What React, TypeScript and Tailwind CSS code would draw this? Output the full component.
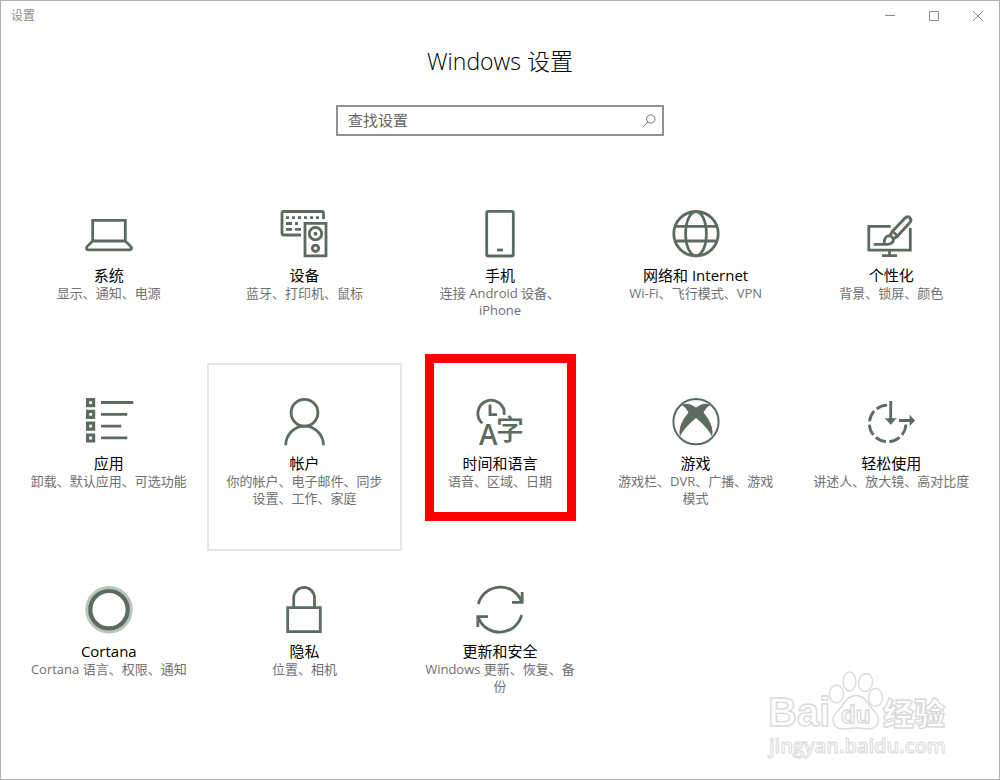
import { useState } from "react";
import type { ReactNode } from "react";

type Category = {
  title: string;
  desc: string;
  icon: ReactNode;
};

function Icon({ children }: { children: ReactNode }) {
  return (
    <svg
      viewBox="0 0 48 48"
      className="h-12 w-12 shrink-0 overflow-visible text-[#5b6b5f]"
      fill="none"
      stroke="currentColor"
      strokeWidth="2.8"
      aria-hidden="true"
    >
      {children}
    </svg>
  );
}

const categories: Category[] = [
  {
    title: "系统",
    desc: "显示、通知、电源",
    icon: (
      <Icon>
        <path d="M7.7 31V10.4h32.6V31zM7.7 31l-5.6 5.6c-1.2 1.4-.6 3.200 1.200 3.200h41.400c1.800 0 2.400-1.800 1.200-3.200L40.300 31" />
      </Icon>
    ),
  },
  {
    title: "设备",
    desc: "蓝牙、打印机、鼠标",
    icon: (
      <Icon>
        <path d="M21 25H3.500A1.500 1.500 0 0 1 2 23.500V3a1.500 1.500 0 0 1 1.500-1.500H42A1.500 1.500 0 0 1 43.500 3v6" />
        <path d="M6 7.700h3M12 7.700h3M18 7.700h3M24 7.700h3M30 7.700h3M36 7.700h3M6 13.500h6M15 13.500h3M6 19.400h6M15 19.400h6" />
        <path d="M25 13.400h21v32.400H25z" />
        <circle cx="35.5" cy="23.7" r="6.2" />
        <circle cx="35.5" cy="23.7" r="2" fill="currentColor" stroke="none" />
        <circle cx="35.5" cy="38.3" r="3.2" />
      </Icon>
    ),
  },
  {
    title: "手机",
    desc: "连接 Android 设备、iPhone",
    icon: (
      <Icon>
        <rect x="10.7" y="1.4" width="26.6" height="44.6" rx="1.5" />
        <path d="M21 40h6" />
      </Icon>
    ),
  },
  {
    title: "网络和 Internet",
    desc: "Wi-Fi、飞行模式、VPN",
    icon: (
      <Icon>
        <circle cx="24" cy="23.7" r="22.2" />
        <ellipse cx="24" cy="23.7" rx="10.4" ry="22.2" />
        <path d="M3 16.300h42M3 31h42" />
      </Icon>
    ),
  },
  {
    title: "个性化",
    desc: "背景、锁屏、颜色",
    icon: (
      <Icon>
        <path d="M23.700 16.400H1.800v23.700h41.500V18M22.600 40v6M15 45.700h15" />
        <path d="M25.500 21.300 37.600 8.500c3.900-4 8.500.4 4.900 4.500L30.600 26z" />
        <path d="M25.500 21.300l-2.700 4.500M30.600 26l-4.200 3" />
        <path d="M6.700 34.400h10.300c0-5.600 1.800-8.800 5.100-8.600 4.200.300 5.500 4.800 2.700 7.200-1.900 1.600-4.800 1.400-7.800 1.400" />
      </Icon>
    ),
  },
  {
    title: "应用",
    desc: "卸载、默认应用、可选功能",
    icon: (
      <Icon>
        <path
          d="M2.600 1.600h6v6h-6zM2.600 13.400h6v6h-6zM2.600 25.200h6v6h-6zM2.600 37h6v6h-6z"
          strokeWidth="3.2"
        />
        <path d="M16 4.500h32.300M16 16.300h26.300M16 28.100h20.300M16 39.800h26.300" />
      </Icon>
    ),
  },
  {
    title: "帐户",
    desc: "你的帐户、电子邮件、同步设置、工作、家庭",
    icon: (
      <Icon>
        <circle cx="24.5" cy="14.7" r="13.4" />
        <path d="M5.700 47.300a18.900 19.200 0 0 1 37.800 0" />
      </Icon>
    ),
  },
  {
    title: "时间和语言",
    desc: "语音、区域、日期",
    icon: (
      <Icon>
        <path d="M6.200 25.200A13.200 13.200 0 1 1 28.200 16.800" />
        <path d="M14 6.500v10.200h7" />
        <text
          x="3"
          y="47"
          className="font-['Open_Sans'] text-[28px] font-semibold"
          fill="currentColor"
          stroke="none"
        >
          A
        </text>
        <text
          x="20"
          y="42"
          className="font-['Noto_Sans_CJK_SC'] text-[28px] font-medium"
          fill="currentColor"
          stroke="none"
        >
          字
        </text>
      </Icon>
    ),
  },
  {
    title: "游戏",
    desc: "游戏栏、DVR、广播、游戏模式",
    icon: (
      <Icon>
        <circle cx="24" cy="23.7" r="22.6" strokeWidth="2" />
        <path
          d="M9.500 7.500C12 5 17 5 24 9.500 31 5 36 5 38.500 7.500 36 7.500 34 10.500 31.500 14.500 38 22 42 31 40 38.500 37 32 30 25 24 20 18 25 11 32 8 38.500 6 31 10 22 16.500 14.500 14 10.500 12 7.500 9.500 7.500Z"
          fill="currentColor"
          stroke="none"
        />
      </Icon>
    ),
  },
  {
    title: "轻松使用",
    desc: "讲述人、放大镜、高对比度",
    icon: (
      <Icon>
        <path
          d="M38.900 26.500A18.300 18.300 0 1 1 20 7.200"
          strokeDasharray="11.2 3.4"
        />
        <path d="M23.700 3v18M32 22.500h12" />
        <path
          d="M17.800 20.300h11.800l-5.900 6.400zM42.600 16.800v11.400l5.400-5.700z"
          fill="currentColor"
          stroke="none"
        />
      </Icon>
    ),
  },
  {
    title: "Cortana",
    desc: "Cortana 语言、权限、通知",
    icon: (
      <Icon>
        <circle cx="24" cy="23.7" r="21.7" stroke="#b9c4bb" strokeWidth="4" />
        <circle cx="24" cy="23.7" r="18.7" strokeWidth="4.2" />
      </Icon>
    ),
  },
  {
    title: "隐私",
    desc: "位置、相机",
    icon: (
      <Icon>
        <path d="M7.700 21.700h32.600v23.900H7.700zM13.700 21.700v-9.600a10.400 10.700 0 0 1 20.800 0v9.600" />
      </Icon>
    ),
  },
  {
    title: "更新和安全",
    desc: "Windows 更新、恢复、备份",
    icon: (
      <Icon>
        <path d="M2.300 18C8.500-3.500 38-5 45.800 16.200M46.200 6v10.400H36" />
        <path d="M45.700 29.200C39.500 50.800 10 52 2.200 31.200M1.800 41V30.600H12" />
      </Icon>
    ),
  },
];

function TitleBar() {
  return (
    <header className="flex h-7 items-center justify-between pl-[10px] text-xs text-[#8c8c8c]">
      <span className="pt-0.5">设置</span>
      <div className="flex h-full">
        <button type="button" aria-label="最小化" className="flex w-11 items-center justify-center">
          <svg viewBox="0 0 11 11" className="h-[11px] w-[11px]" fill="none" stroke="currentColor">
            <path d="M1 5.500h10" />
          </svg>
        </button>
        <button type="button" aria-label="最大化" className="flex w-11 items-center justify-center">
          <svg viewBox="0 0 11 11" className="h-[11px] w-[11px]" fill="none" stroke="currentColor">
            <path d="M1.500 1.500h9v9h-9z" />
          </svg>
        </button>
        <button type="button" aria-label="关闭" className="flex w-11 items-center justify-center">
          <svg viewBox="0 0 11 11" className="h-[11px] w-[11px]" fill="none" stroke="currentColor">
            <path d="M1 1l10 10M11 1L1 11" />
          </svg>
        </button>
      </div>
    </header>
  );
}

function Watermark() {
  return (
    <svg
      viewBox="0 0 190 96"
      className="pointer-events-none absolute right-[46px] bottom-[14px] h-24 w-[190px]"
      fill="#fff"
      stroke="#dadada"
      strokeWidth="1.4"
    >
      <text x="5" y="57" className="font-['Liberation_Sans'] text-[40px] font-bold">
        Bai
      </text>
      <ellipse cx="73.5" cy="25" rx="7" ry="9" />
      <ellipse cx="86.5" cy="12.5" rx="6.5" ry="9.5" />
      <ellipse cx="102.5" cy="13.5" rx="7" ry="9" transform="rotate(12 102.5 13.5)" />
      <ellipse cx="112.5" cy="28.5" rx="7" ry="9" />
      <path d="M93 26.500c7 0 11 5.500 14.500 11 4 6 8 7.500 8 13 0 6-4.500 9.500-10.500 9.500-4 0-7-1-12-1s-8 1-12.500 1C74 60 70 56.500 70 50.500c0-5.500 4.500-7 8.500-13 3.500-5.500 7.500-11 14.500-11z" />
      <text x="78" y="54" className="font-['Liberation_Sans'] text-2xl font-bold">
        du
      </text>
      <text x="120" y="56" className="font-['Noto_Sans_CJK_SC'] text-[31px] font-black">
        经验
      </text>
      <text x="6" y="84" className="font-['Open_Sans'] text-xl font-semibold" strokeWidth="1">
        jingyan.baidu.com
      </text>
    </svg>
  );
}

export default function App() {
  const [query, setQuery] = useState("");

  return (
    <div className="relative min-h-screen border border-[#b0b0b0] bg-white font-['Open_Sans','Noto_Sans_CJK_SC',sans-serif]">
      <TitleBar />

      <main className="flex flex-col px-[10px] pb-9">
        <h1 className="mt-4 text-center text-[23px] leading-8 font-light text-black">
          Windows 设置
        </h1>

        <label className="mx-auto mt-7 flex h-[31px] w-[328px] items-center border-2 border-[#919191] pr-[6px] pl-[10px]">
          <input
            type="text"
            aria-label="查找设置"
            placeholder="查找设置"
            value={query}
            onChange={(e) => setQuery(e.target.value)}
            className="min-w-0 flex-1 pb-0.5 text-[15px] leading-5 outline-none placeholder:text-[#666]"
          />
          <svg
            viewBox="0 0 14 14"
            className="h-[14px] w-[14px] text-[#777]"
            fill="none"
            stroke="currentColor"
            aria-hidden="true"
          >
            <circle cx="8.8" cy="5" r="4.2" />
            <path d="M5.800 8L1 13" />
          </svg>
        </label>

        <div className="mt-[39px] grid grid-cols-5">
          {categories.map((item) => (
            <button
              key={item.title}
              type="button"
              className={
                item.title === "帐户"
                  ? "relative flex h-[188px] flex-col items-center border-2 border-[#e6e6e6] pt-[33px]"
                  : "relative flex h-[188px] flex-col items-center pt-[35px]"
              }
            >
              {item.icon}
              <span className="mt-[7px] text-[15px] leading-5 text-black">{item.title}</span>
              <span className="w-40 text-[13px] leading-[17px] text-[#707070]">{item.desc}</span>
              {item.title === "时间和语言" && (
                <span className="absolute -top-[9px] right-[22px] bottom-[30px] left-[23px] border-[9px] border-[#fe0000]" />
              )}
            </button>
          ))}
        </div>
      </main>

      <Watermark />
    </div>
  );
}
